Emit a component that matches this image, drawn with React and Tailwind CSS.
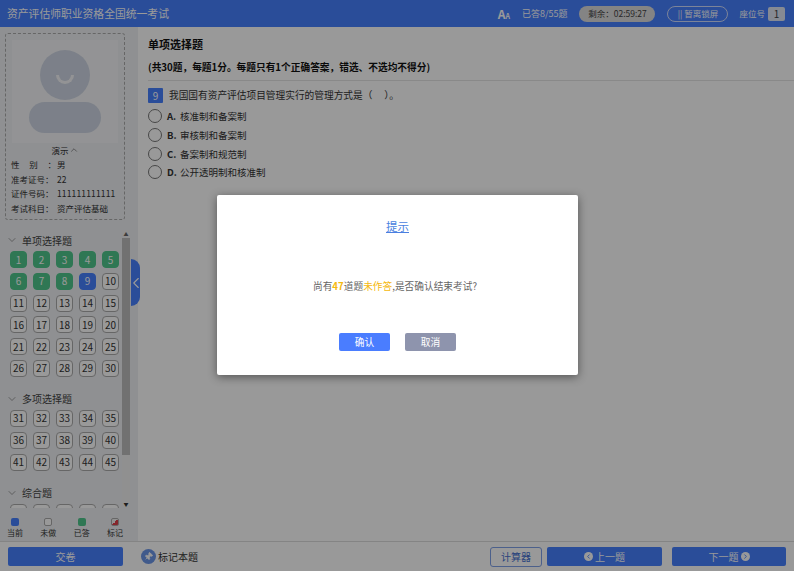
import { ChevronDown, ChevronLeft, ChevronRight, ChevronUp, Pin } from "lucide-react";

const font = "font-['Noto_Sans_CJK_SC','Noto_Sans',sans-serif]";

const range = (from, to) => Array.from({ length: to - from + 1 }, (_, i) => from + i);

function NumCell({ n, status }) {
  const colors = {
    done: "bg-[#4fc78c] text-white border-[#4fc78c]",
    current: "bg-[#4680ff] text-white border-[#4680ff]",
    todo: "bg-white text-[#333] border-[#aaa]",
  };
  return (
    <div className={`w-[17px] h-[17px] rounded-[4px] border flex items-center justify-center text-[10px] leading-none ${colors[status]}`}>
      {n}
    </div>
  );
}

function Section({ title, nums, mt, blank }) {
  return (
    <div className={mt}>
      <div className="flex items-center h-[14px] pl-[6px] text-[10px] text-[#444]">
        <ChevronDown size={12} strokeWidth={1.2} className="text-[#666]" />
        <span className="ml-[4px]">{title}</span>
      </div>
      <div className="grid grid-cols-[repeat(5,17px)] gap-x-[6px] gap-y-[4.8px] pl-[10px] mt-[4px]">
        {nums.map((n) => (
          <NumCell key={n} n={blank ? "" : n} status={n < 9 ? "done" : n === 9 ? "current" : "todo"} />
        ))}
      </div>
    </div>
  );
}

function Legend({ label, children }) {
  return (
    <div className="flex flex-col items-center w-[24px] text-[8px] text-[#333] gap-[1px]">
      {children}
      <span className="leading-[11px] whitespace-nowrap">{label}</span>
    </div>
  );
}

export default function App() {
  return (
    <div className={`relative w-[794px] h-[571px] overflow-hidden flex flex-col bg-white ${font}`}>
      {/* header */}
      <header className="h-[27px] shrink-0 bg-[#4680ff] text-white flex items-center pl-[7px] pr-[9px]">
        <div className="text-[10.8px] flex-1">资产评估师职业资格全国统一考试</div>
        <div className="flex items-end mr-[12px] font-bold leading-none">
          <span className="text-[12px]">A</span>
          <span className="text-[7px]">A</span>
        </div>
        <span className="text-[9px] mr-[12px]">已答8/55题</span>
        <div className="w-[76px] h-[16px] rounded-full bg-[#ddd] text-[#444] text-[8.5px] flex items-center justify-center mr-[12px]">
          剩余：02:59:27
        </div>
        <div className="w-[61px] h-[16px] rounded-full border border-[#cfdcff] text-[8.5px] flex items-center justify-center mr-[11px]">
          || 暂离锁屏
        </div>
        <span className="text-[8.5px] mr-[3px]">座位号</span>
        <div className="w-[17px] h-[14px] rounded-[2px] bg-[#dfe6f5] text-[#444] text-[10px] flex items-center justify-center">1</div>
      </header>

      <div className="flex-1 flex min-h-0 relative">
        {/* sidebar */}
        <aside className="w-[138px] shrink-0 bg-[#eef0f3] flex flex-col">
          <div className="mx-[5px] mt-[6px] w-[120px] h-[187px] border border-dashed border-[#aaa] rounded-[3px] px-[6px] pt-[6px] shrink-0">
            <div className="h-[103px] bg-[#f5f6f8] flex flex-col items-center pt-[10px]">
              <div className="relative w-[50px] h-[50px] rounded-full bg-[#cfd6e4]">
                <div className="absolute left-[16px] top-[25px] w-[18px] h-[9px] border-[3px] border-t-0 border-[#f5f6f8] rounded-b-full" />
              </div>
              <div className="w-[72px] h-[31px] rounded-full bg-[#cfd6e4] mt-[2px]" />
            </div>
            <div className="flex items-center justify-center text-[8.5px] text-[#333] mt-[1px] h-[12px]">
              演示
              <ChevronUp size={10} strokeWidth={1.2} />
            </div>
            <div className="text-[8.5px] text-[#333] leading-[14.5px] mt-[1px] -ml-[1px] whitespace-nowrap">
              <div className="flex"><span className="w-[46px] flex justify-between pr-[1px]"><span>性</span><span>别</span><span>：</span></span><span>男</span></div>
              <div className="flex"><span className="w-[46px]">准考证号：</span><span>22</span></div>
              <div className="flex"><span className="w-[46px]">证件号码：</span><span className="tracking-[0.15px]">111111111111</span></div>
              <div className="flex"><span className="w-[46px]">考试科目：</span><span>资产评估基础</span></div>
            </div>
          </div>

          <div className="flex h-[278px] mt-[10px] shrink-0">
            <div className="w-[122px] overflow-hidden shrink-0 pt-[3px]">
              <Section title="单项选择题" nums={range(1, 30)} />
              <Section title="多项选择题" nums={range(31, 45)} mt="mt-[15px]" />
              <Section title="综合题" nums={range(46, 50)} mt="mt-[15px]" blank />
            </div>
            <div className="w-[8px] bg-[#f1f1f1] flex flex-col items-center">
              <div className="h-[8px] text-[5px] leading-[8px] text-[#666]">▲</div>
              <div className="w-full h-[217px] bg-[#bdbdbd]" />
              <div className="flex-1" />
              <div className="h-[8px] text-[5px] leading-[8px] text-[#333]">▼</div>
            </div>
          </div>

          <div className="flex justify-between pl-[3px] w-[127px] mt-[10px]">
            <Legend label="当前">
              <div className="w-[8px] h-[8px] rounded-[2px] bg-[#4680ff]" />
            </Legend>
            <Legend label="未做">
              <div className="w-[8px] h-[8px] rounded-[2px] bg-white border border-[#aaa]" />
            </Legend>
            <Legend label="已答">
              <div className="w-[8px] h-[8px] rounded-[2px] bg-[#4fc78c]" />
            </Legend>
            <Legend label="标记">
              <div className="w-[8px] h-[8px] rounded-[2px] border border-[#aaa] bg-[linear-gradient(135deg,#f2f2f2_50%,#e0404a_50%)]" />
            </Legend>
          </div>
        </aside>

        {/* collapse tab */}
        <div className="absolute left-[131px] top-[232px] w-[9px] h-[47px] rounded-r-[9px] bg-[#4680ff] text-white flex items-center justify-center">
          <ChevronLeft size={18} strokeWidth={1.5} className="shrink-0" />
        </div>

        {/* question */}
        <main className="flex-1 pl-[10px] text-[#333]">
          <div className="border-b border-[#e5e5e5] h-[54px] pt-[9px] text-[#111] font-bold">
            <div className="text-[11px] leading-[16px]">单项选择题</div>
            <div className="text-[9.7px] leading-[14px] mt-[8px] whitespace-nowrap">(共30题，每题1分。每题只有1个正确答案，错选、不选均不得分)</div>
          </div>
          <div className="flex items-center mt-[6px] h-[16px]">
            <div className="w-[15px] h-[15px] bg-[#4680ff] text-white text-[10px] flex items-center justify-center rounded-[1px]">9</div>
            <span className="ml-[6px] text-[9.7px] whitespace-nowrap">我国国有资产评估项目管理实行的管理方式是（　 ）。</span>
          </div>
          <div className="mt-[4px]">
            {[
              ["A.", "核准制和备案制"],
              ["B.", "审核制和备案制"],
              ["C.", "备案制和规范制"],
              ["D.", "公开透明制和核准制"],
            ].map(([k, v]) => (
              <div key={k} className="flex items-center h-[18.7px] text-[9.5px]">
                <div className="w-[14px] h-[14px] rounded-full border border-[#777] bg-white" />
                <span className="ml-[5px] font-bold w-[13px]">{k}</span>
                <span>{v}</span>
              </div>
            ))}
          </div>
        </main>
      </div>

      {/* footer */}
      <footer className="h-[30px] shrink-0 border-t border-[#ddd] bg-white flex items-center pl-[8px] pr-[8px]">
        <div className="w-[115px] h-[19px] rounded-[2px] bg-[#4680ff] text-white text-[10px] flex items-center justify-center">交卷</div>
        <div className="w-[15px] h-[15px] rounded-full bg-[#6c96e8] text-white flex items-center justify-center ml-[18px]">
          <Pin size={9} fill="currentColor" className="rotate-45" />
        </div>
        <span className="ml-[2px] text-[10px] text-[#333] flex-1">标记本题</span>
        <div className="w-[52px] h-[20px] rounded-[3px] border border-[#7fa0e8] text-[#4670d0] text-[10px] flex items-center justify-center">计算器</div>
        <div className="w-[115px] h-[19px] ml-[5px] rounded-[2px] bg-[#4680ff] text-white text-[10px] flex items-center justify-center gap-[2px]">
          <span className="w-[9px] h-[9px] rounded-full bg-white text-[#4680ff] flex items-center justify-center"><ChevronLeft size={7} strokeWidth={3} /></span>
          上一题
        </div>
        <div className="w-[114px] h-[19px] ml-[10px] rounded-[2px] bg-[#4680ff] text-white text-[10px] flex items-center justify-center gap-[2px]">
          下一题
          <span className="w-[9px] h-[9px] rounded-full bg-white text-[#4680ff] flex items-center justify-center"><ChevronRight size={7} strokeWidth={3} /></span>
        </div>
      </footer>

      {/* modal overlay */}
      <div className="absolute inset-0 bg-black/40 flex items-center justify-center">
        <div className="w-[361px] h-[180px] bg-white rounded-[2px] shadow-[0_2px_10px_rgba(0,0,0,0.45)] flex flex-col items-center mt-[-1px] ml-[1px]">
          <div className="mt-[22px] text-[11.5px] leading-[18px] text-[#4a7fe0] underline">提示</div>
          <div className="mt-[43px] mr-[5px] text-[9.7px] leading-[16px] text-[#666]">
            尚有<span className="text-[#f5b90f] font-bold">47</span>道题<span className="text-[#f5b90f]">未作答</span>,是否确认结束考试?
          </div>
          <div className="mt-[39px] flex gap-[15px]">
            <div className="w-[51px] h-[18px] rounded-[2px] bg-[#4a7dff] text-white text-[9.7px] flex items-center justify-center">确认</div>
            <div className="w-[51px] h-[18px] rounded-[2px] bg-[#8e94ad] text-white text-[9.7px] flex items-center justify-center">取消</div>
          </div>
        </div>
      </div>
    </div>
  );
}
